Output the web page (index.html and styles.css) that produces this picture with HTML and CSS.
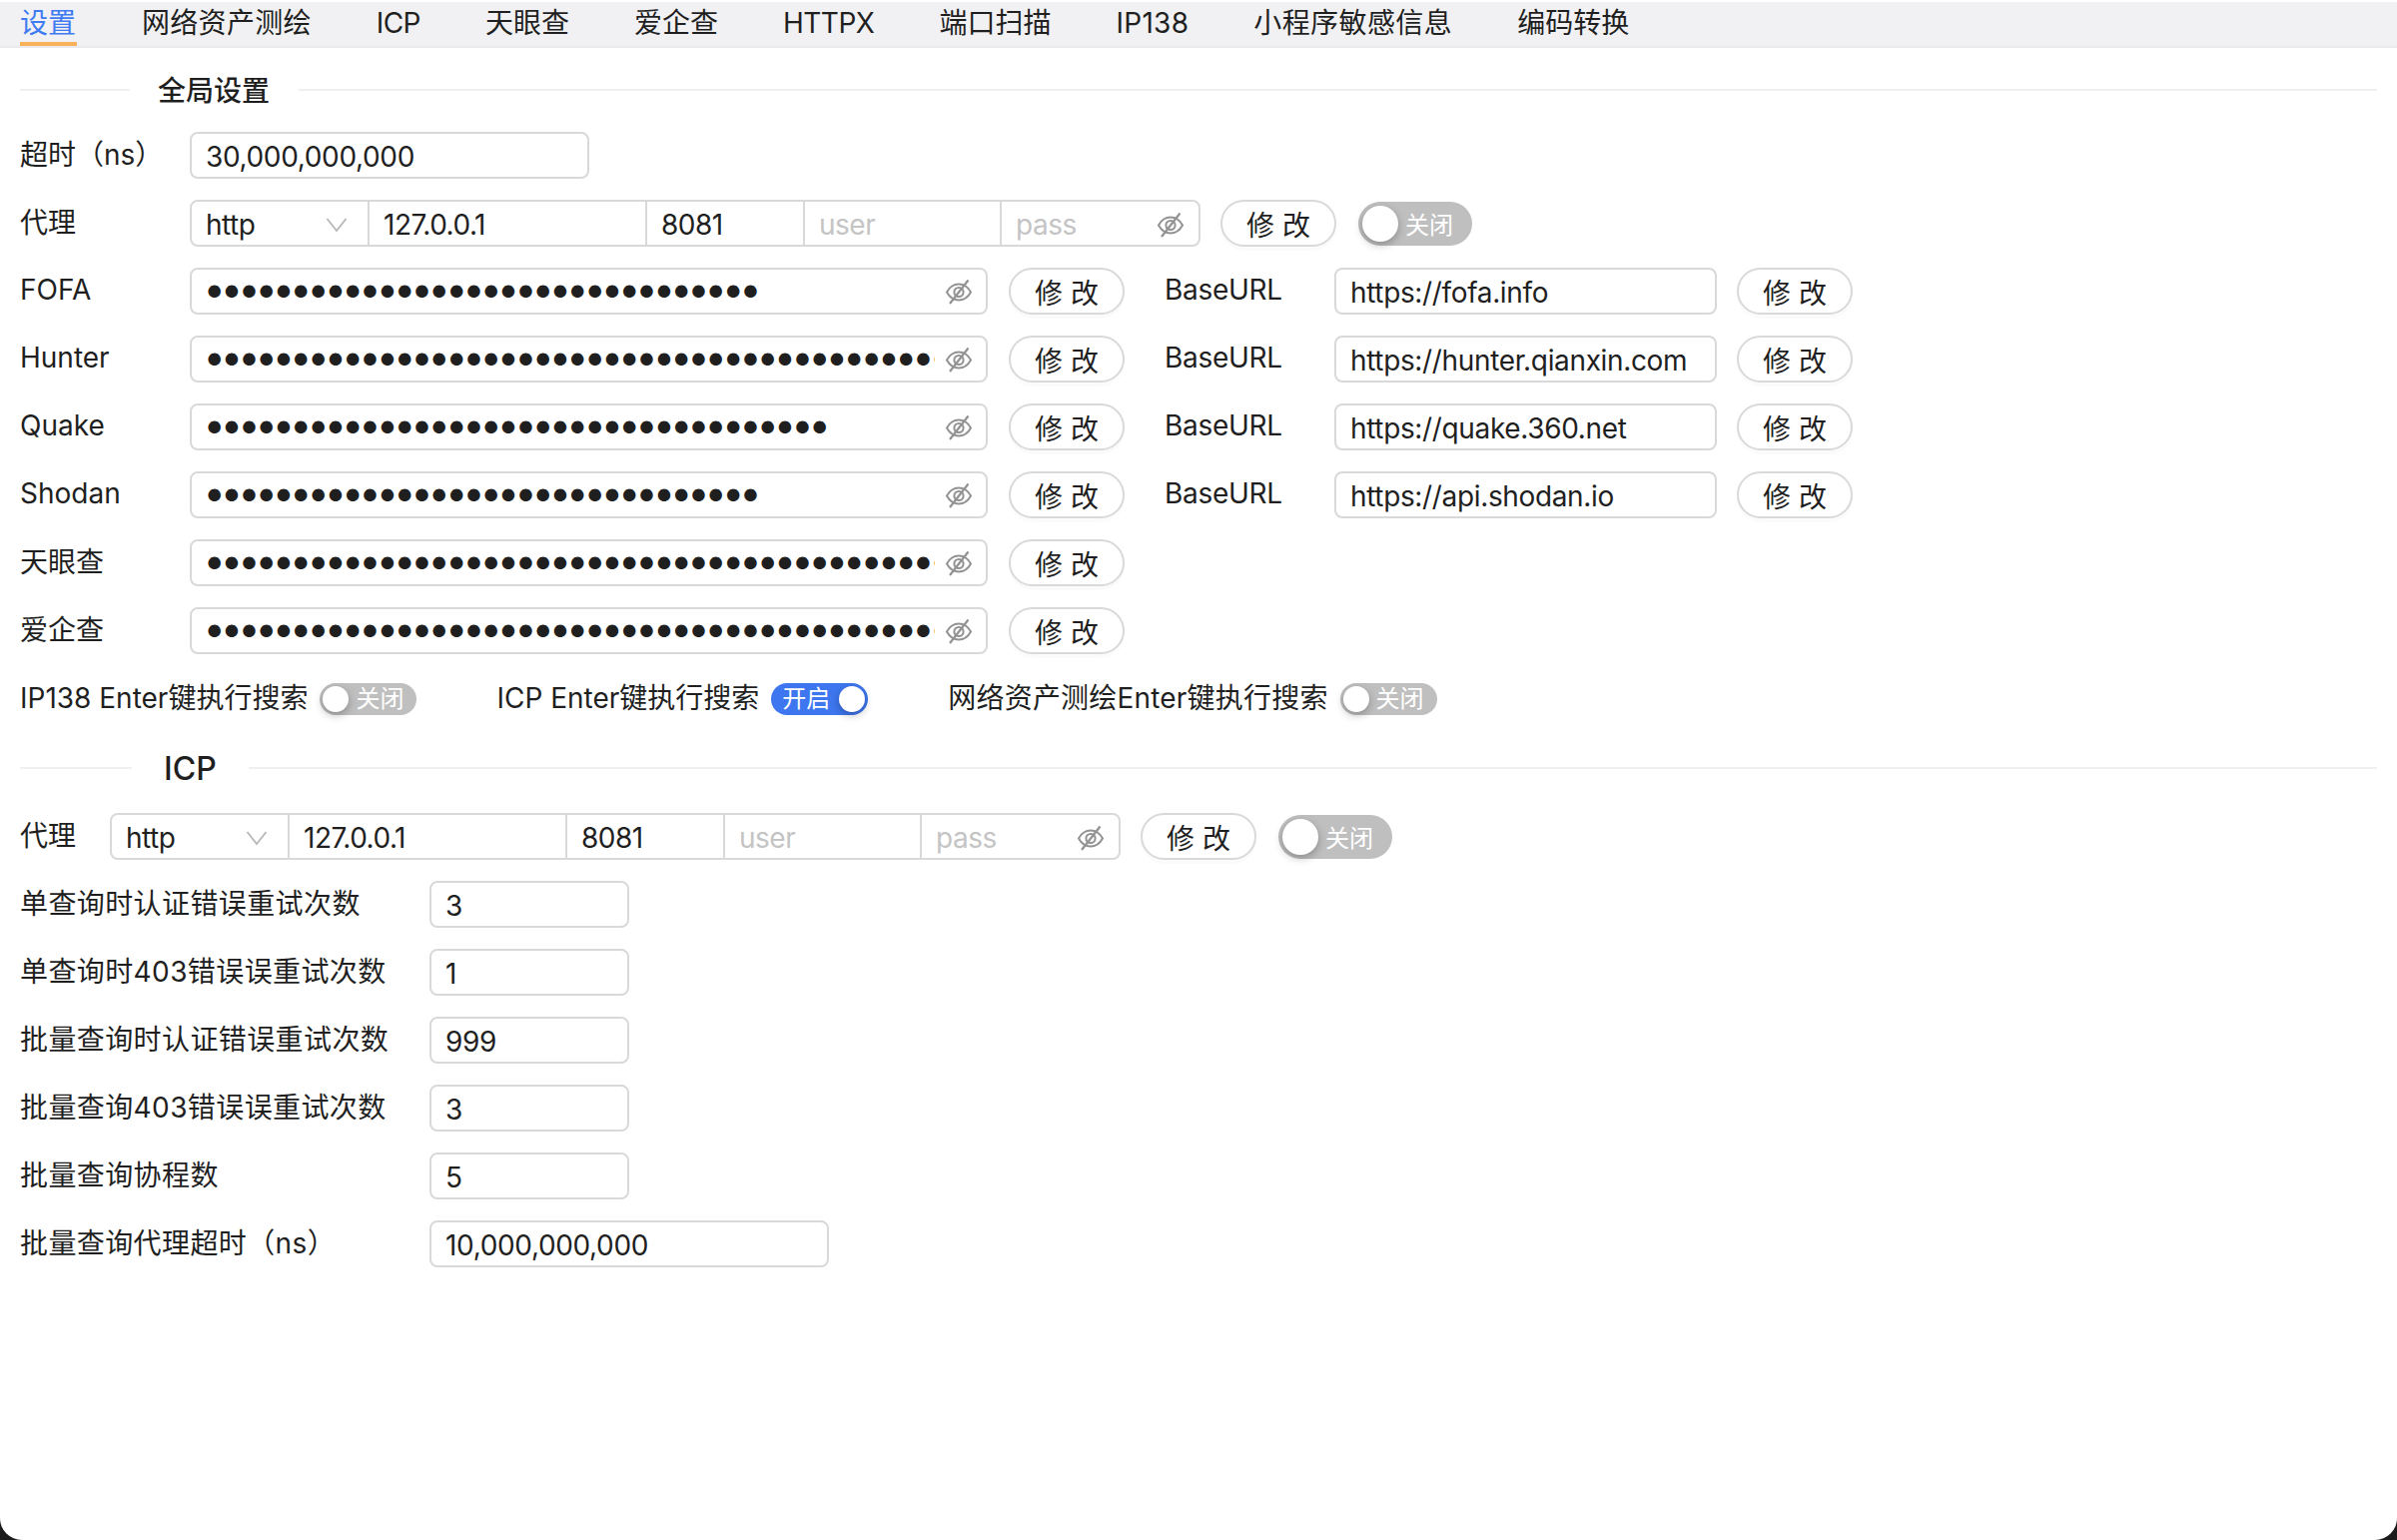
FILE: index.html
```html
<!DOCTYPE html>
<html lang="zh-CN">
<head>
<meta charset="utf-8">
<title>设置</title>
<link rel="stylesheet" href="styles.css">
</head>
<body>
<svg class="defs" width="0" height="0" aria-hidden="true">
  <symbol id="eye" viewBox="0 0 28 28">
    <path d="M2 14.5C5 9 9 6.5 14 6.5S23 9 26 14.5C23 20 19 22.5 14 22.5S5 20 2 14.5Z" fill="none" stroke="currentColor" stroke-width="2"/>
    <circle cx="14" cy="14.5" r="4.6" fill="none" stroke="currentColor" stroke-width="2"/>
    <path d="M23.5 2.5 5 26" fill="none" stroke="currentColor" stroke-width="2.2"/>
  </symbol>
  <symbol id="chev" viewBox="0 0 22 16">
    <path d="M1.5 2 11 14 20.5 2" fill="none" stroke="currentColor" stroke-width="1.9"/>
  </symbol>
</svg>
<div class="app">
  <nav class="tabs">
    <a class="tab active">设置</a>
    <a class="tab loose">网络资产测绘</a>
    <a class="tab icp">ICP</a>
    <a class="tab">天眼查</a>
    <a class="tab">爱企查</a>
    <a class="tab narrow">HTTPX</a>
    <a class="tab">端口扫描</a>
    <a class="tab ip">IP138</a>
    <a class="tab wide">小程序敏感信息</a>
    <a class="tab">编码转换</a>
  </nav>
  <main class="content">
    <h2 class="divider"><span>全局设置</span></h2>
    <div class="rows">
      <div class="row"><label class="lab cjk w170">超时（ns）</label><input class="field w400" value="30,000,000,000"></div>
      <div class="row">
        <label class="lab cjk w170">代理</label>
        <div class="group">
          <div class="cell sel"><span>http</span><svg class="chev"><use href="#chev"/></svg></div>
          <input class="cell host" value="127.0.0.1">
          <input class="cell port" value="8081">
          <input class="cell user" placeholder="user">
          <div class="cell passc"><input class="inner" placeholder="pass"><svg class="eye"><use href="#eye"/></svg></div>
        </div>
        <button class="btn b20">修 改</button>
        <div class="sw big off b22"><i></i><span>关闭</span></div>
      </div>
      <div class="row">
        <label class="lab w170">FOFA</label>
        <div class="secret"><input class="dots" type="password" value="abcdefghijklmnopqrstuvwxyz012345"><svg class="eye"><use href="#eye"/></svg></div>
        <button class="btn b21">修 改</button>
        <label class="lab base">BaseURL</label>
        <input class="field url" value="https://fofa.info">
        <button class="btn b20">修 改</button>
      </div>
      <div class="row">
        <label class="lab w170">Hunter</label>
        <div class="secret"><input class="dots" type="password" value="abcdefghijklmnopqrstuvwxyz0123456789abcdefghijklmnopqrstuvwxyz"><svg class="eye"><use href="#eye"/></svg></div>
        <button class="btn b21">修 改</button>
        <label class="lab base">BaseURL</label>
        <input class="field url" value="https://hunter.qianxin.com">
        <button class="btn b20">修 改</button>
      </div>
      <div class="row">
        <label class="lab w170">Quake</label>
        <div class="secret"><input class="dots" type="password" value="abcdefghijklmnopqrstuvwxyz0123456789"><svg class="eye"><use href="#eye"/></svg></div>
        <button class="btn b21">修 改</button>
        <label class="lab base">BaseURL</label>
        <input class="field url" value="https://quake.360.net">
        <button class="btn b20">修 改</button>
      </div>
      <div class="row">
        <label class="lab w170">Shodan</label>
        <div class="secret"><input class="dots" type="password" value="abcdefghijklmnopqrstuvwxyz012345"><svg class="eye"><use href="#eye"/></svg></div>
        <button class="btn b21">修 改</button>
        <label class="lab base">BaseURL</label>
        <input class="field url" value="https://api.shodan.io">
        <button class="btn b20">修 改</button>
      </div>
      <div class="row">
        <label class="lab cjk w170">天眼查</label>
        <div class="secret"><input class="dots" type="password" value="abcdefghijklmnopqrstuvwxyz0123456789abcdefghijklmnopqrstuvwxyz"><svg class="eye"><use href="#eye"/></svg></div>
        <button class="btn b21">修 改</button>
      </div>
      <div class="row">
        <label class="lab cjk w170">爱企查</label>
        <div class="secret"><input class="dots" type="password" value="abcdefghijklmnopqrstuvwxyz0123456789abcdefghijklmnopqrstuvwxyz"><svg class="eye"><use href="#eye"/></svg></div>
        <button class="btn b21">修 改</button>
      </div>
      <div class="row toggles">
        <div class="toggle"><label class="lab cjk">IP138 Enter键执行搜索</label><div class="sw small off"><i></i><span>关闭</span></div></div>
        <div class="toggle"><label class="lab cjk">ICP Enter键执行搜索</label><div class="sw small on"><span>开启</span><i></i></div></div>
        <div class="toggle"><label class="lab cjk long">网络资产测绘Enter键执行搜索</label><div class="sw small off"><i></i><span>关闭</span></div></div>
      </div>
    </div>
    <h2 class="divider second"><span>ICP</span></h2>
    <div class="rows tight">
      <div class="row">
        <label class="lab w90">代理</label>
        <div class="group">
          <div class="cell sel"><span>http</span><svg class="chev"><use href="#chev"/></svg></div>
          <input class="cell host" value="127.0.0.1">
          <input class="cell port" value="8081">
          <input class="cell user" placeholder="user">
          <div class="cell passc"><input class="inner" placeholder="pass"><svg class="eye"><use href="#eye"/></svg></div>
        </div>
        <button class="btn b20">修 改</button>
        <div class="sw big off b22"><i></i><span>关闭</span></div>
      </div>
      <div class="row"><label class="lab w410">单查询时认证错误重试次数</label><input class="field w200" value="3"></div>
      <div class="row"><label class="lab w410">单查询时403错误误重试次数</label><input class="field w200" value="1"></div>
      <div class="row"><label class="lab w410">批量查询时认证错误重试次数</label><input class="field w200" value="999"></div>
      <div class="row"><label class="lab w410">批量查询403错误误重试次数</label><input class="field w200" value="3"></div>
      <div class="row"><label class="lab w410">批量查询协程数</label><input class="field w200" value="5"></div>
      <div class="row"><label class="lab w410">批量查询代理超时（ns）</label><input class="field w400" value="10,000,000,000"></div>
    </div>
  </main>
</div>
</body>
</html>
```
FILE: styles.css
```css
* { box-sizing: border-box; }
html, body { margin: 0; height: 100%; }
body {
  background: #1c1c1c;
  font-family: Inter, "Noto Sans CJK SC", sans-serif;
  font-size: 28px;
  color: #1f1f1f;
}
.defs { position: absolute; }
.app {
  height: 1542px;
  background: #fff;
  border-radius: 0 0 22px 22px;
  overflow: hidden;
  padding-top: 2px;
}
.tabs {
  display: flex;
  gap: 65px;
  height: 46px;
  padding-left: 20px;
  background: #f1f1f3;
  border-bottom: 2px solid #e9e9ed;
}
.tab {
  height: 44px;
  line-height: 43px;
  white-space: nowrap;
}
.tab.active {
  color: #3f7bf2;
  border-bottom: 4px solid #f8b05a;
  padding-right: 1px;
}
.tab.loose { letter-spacing: 0.3px; }
.tab.icp { letter-spacing: -0.6px; }
.tab.narrow { letter-spacing: -0.5px; }
.tab.ip { letter-spacing: 0.3px; }
.tab.wide { letter-spacing: 0.4px; }
.content { padding: 22px 20px 0; }
.divider {
  display: flex;
  align-items: center;
  margin: 0 0 22px;
  height: 40px;
  font-size: 28px;
  font-weight: 500;
}
.divider::before, .divider::after {
  content: "";
  height: 2px;
  background: #f0f0f0;
}
.divider::before { width: 110px; }
.divider::after { flex: 1; }
.divider span { padding: 0 29px 2px 28px; }
.divider.second {
  margin: 24px 0 23px;
  height: 44px;
  font-size: 32px;
}
.divider.second::before { width: 112px; }
.divider.second span { padding: 0 32px; }
.rows { display: flex; flex-direction: column; gap: 21px; }
.row { display: flex; align-items: center; height: 47px; }
.lab { white-space: nowrap; position: relative; top: -2px; }
.lab.cjk, .tight .lab { top: -3px; }
.w170 { width: 170px; }
.w90 { width: 90px; }
.w410 { width: 410px; letter-spacing: 0.4px; }
.base { width: 170px; margin-left: 40px; letter-spacing: -0.3px; }
input { font: inherit; color: inherit; outline: none; }
input::placeholder { color: #c4c4c4; }
.field {
  height: 47px;
  border: 2px solid #d9d9d9;
  border-radius: 8px;
  padding: 2px 14px 0;
  letter-spacing: -0.35px;
  background: #fff;
}
.w400 { width: 400px; }
.w200 { width: 200px; }
.url { width: 383px; }
.group {
  display: flex;
  height: 47px;
  border: 2px solid #d9d9d9;
  border-radius: 8px;
}
.cell {
  height: 43px;
  border: 0;
  border-left: 2px solid #d9d9d9;
  background: transparent;
  padding: 2px 14px 0;
  letter-spacing: -0.5px;
}
.sel {
  width: 176px;
  border-left: 0;
  display: flex;
  align-items: center;
  justify-content: space-between;
  color: #1f1f1f;
  padding-right: 20px;
}
.chev { width: 22px; height: 16px; color: #b9b9b9; }
.host { width: 278px; }
.port { width: 158px; }
.user { width: 197px; }
.passc { width: 199px; display: flex; align-items: center; padding-right: 14px; }
.inner { flex: 1; min-width: 0; width: 0; border: 0; padding: 0; background: transparent; letter-spacing: -0.5px; }
.eye { width: 28px; height: 28px; color: #929292; flex: none; }
.secret {
  width: 799px;
  height: 47px;
  display: flex;
  align-items: center;
  border: 2px solid #d9d9d9;
  border-radius: 8px;
  padding: 0 13px 0 10px;
}
.dots {
  flex: 1;
  min-width: 0;
  width: 0;
  height: 43px;
  border: 0;
  padding: 2px 0 0;
  margin-right: 10px;
  font-family: "DejaVu Sans", sans-serif;
  font-size: 43px;
  letter-spacing: -8.05px;
  color: #1f1f1f;
}
.btn {
  width: 116px;
  height: 47px;
  border: 2px solid #d9d9d9;
  border-radius: 24px;
  background: #fff;
  font: inherit;
  color: #1f1f1f;
  padding: 0;
  box-shadow: 0 4px 0 rgba(0, 0, 0, 0.015);
}
.b20 { margin-left: 20px; }
.b21 { margin-left: 21px; }
.b22 { margin-left: 22px; }
.sw {
  display: flex;
  align-items: center;
  color: #fff;
  background: #bfbfbf;
  font-size: 24px;
  flex: none;
}
.sw.on { background: #3d76ef; }
.sw i {
  display: block;
  background: #fff;
  border-radius: 50%;
  flex: none;
  box-shadow: 0 3px 8px rgba(0, 0, 0, 0.28);
}
.sw.big { width: 114px; height: 44px; border-radius: 22px; padding: 0 4px; gap: 7px; }
.sw.big i { width: 36px; height: 36px; }
.sw.small { width: 97px; height: 32px; border-radius: 16px; padding: 0 3px; gap: 7px; line-height: 32px; }
.sw.small i { width: 26px; height: 26px; }
.sw.small.on { justify-content: space-between; padding-left: 11px; }
.toggles { gap: 80px; }
.toggle { display: flex; align-items: center; gap: 12px; }
.toggle .long { letter-spacing: 0.2px; }
```
